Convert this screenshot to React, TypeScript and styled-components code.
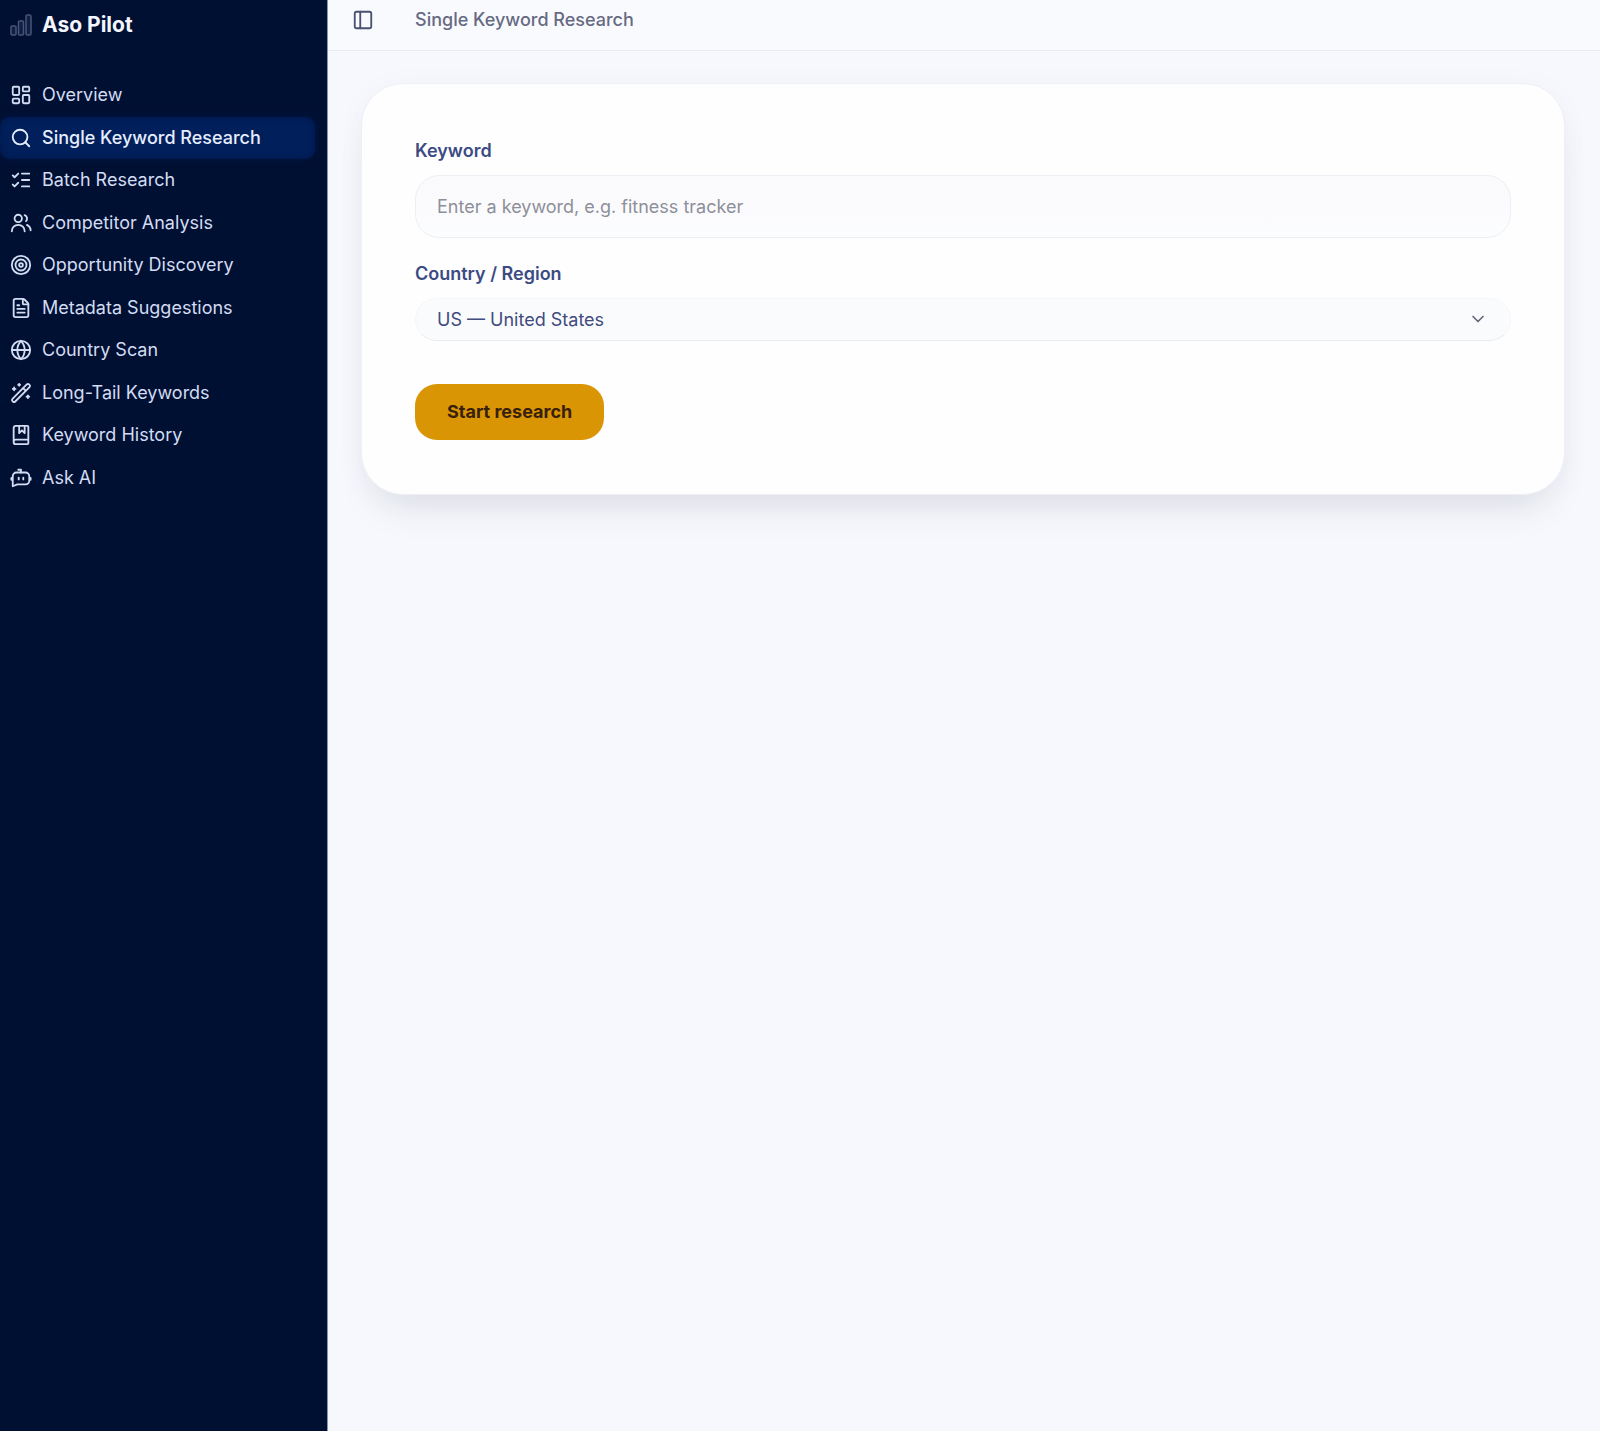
import React from "react";
import styled, { createGlobalStyle } from "styled-components";
import {
  LayoutDashboard,
  Search,
  ListChecks,
  Target,
  FileText,
  Globe,
  BookMarked,
  PanelLeft,
  ChevronDown,
} from "lucide-react";

const GlobalStyle = createGlobalStyle`
  *, *::before, *::after { box-sizing: border-box; }
  body {
    margin: 0;
    background: #f6f8fd;
    font-family: Inter, "Liberation Sans", sans-serif;
    font-size: 18px;
    line-height: 24px;
  }
  button, input, select { font: inherit; }
`;

const Shell = styled.div`
  display: flex;
  min-height: 100vh;
`;

const Sidebar = styled.aside`
  flex: 0 0 328px;
  display: flex;
  flex-direction: column;
  gap: 24px;
  background: #001033;
  border-right: 1px solid #8a93ad;
  color: #d3dcf2;
`;

const Brand = styled.a`
  display: flex;
  align-items: center;
  gap: 10px;
  height: 50px;
  padding-left: 10px;
  color: #f3f6ff;
  font-size: 21px;
  font-weight: 700;
  text-decoration: none;
`;

const Nav = styled.nav`
  display: grid;
  grid-auto-rows: 1fr;
  height: 425px;
  padding-right: 12px;
`;

const NavLink = styled.a<{ $active?: boolean }>`
  display: flex;
  align-items: center;
  gap: 10px;
  padding-left: 10px;
  border-radius: 10px;
  color: ${(p) => (p.$active ? "#e6edff" : "inherit")};
  font-weight: ${(p) => (p.$active ? 500 : 400)};
  text-decoration: none;
  background: ${(p) => (p.$active ? "#001f5b" : "transparent")};
  box-shadow: ${(p) => (p.$active ? "inset 0 0 6px #001847, 0 0 6px #001847" : "none")};
`;

const Main = styled.main`
  flex: 1;
  min-width: 0;
`;

const TopBar = styled.header`
  display: flex;
  align-items: flex-start;
  gap: 40px;
  height: 51px;
  padding: 8px 23px;
  background: #f9fafe;
  border-bottom: 1px solid #e9ecf4;
`;

const IconButton = styled.button`
  display: flex;
  padding: 1px;
  border: 0;
  background: none;
  color: #4a4f74;
`;

const PageTitle = styled.h1`
  margin: 0;
  color: #666a82;
  font-size: 18px;
  font-weight: 500;
`;

const Card = styled.form`
  margin: 32px 35px 0 33px;
  padding: 55px 53px 54px;
  background: #fefefe;
  border: 1px solid #eef0f7;
  border-radius: 42px;
  box-shadow: 0 24px 40px -16px rgba(30, 30, 40, 0.12), 0 4px 32px rgba(60, 50, 110, 0.03);
`;

const Label = styled.label`
  display: block;
  margin-bottom: 12px;
  color: #3c4b84;
  font-weight: 600;
`;

const TextInput = styled.input`
  display: block;
  width: 100%;
  height: 63px;
  margin-bottom: 24px;
  padding: 0 21px;
  border: 1px solid #eeeff4;
  border-radius: 24px;
  background: linear-gradient(#faf9fc, #fcfdff);
  color: #36467f;
  &::placeholder {
    color: #8d8f99;
    opacity: 1;
  }
`;

const SelectWrap = styled.div`
  position: relative;
  margin-bottom: 43px;
  svg {
    position: absolute;
    top: 11px;
    right: 23px;
    color: #62667a;
    pointer-events: none;
  }
`;

const Select = styled.select`
  display: block;
  width: 100%;
  height: 43px;
  padding: 0 21px;
  border: 1px solid #f5f6fa;
  border-bottom-color: #e9ebf1;
  border-radius: 22px;
  background: #fafbfd;
  color: #414b7d;
  appearance: none;
`;

const SubmitButton = styled.button`
  display: block;
  height: 56px;
  padding: 0 32px;
  border: 0;
  border-radius: 22px;
  background: #da9505;
  color: #38200b;
  font-weight: 700;
`;

type IconProps = { size?: number };

const LineIcon = ({ size = 22, children }: IconProps & { children: React.ReactNode }) => (
  <svg
    width={size}
    height={size}
    viewBox="0 0 24 24"
    fill="none"
    stroke="currentColor"
    strokeWidth="2"
    strokeLinecap="round"
    strokeLinejoin="round"
    aria-hidden="true"
  >
    {children}
  </svg>
);

const PeopleIcon = (props: IconProps) => (
  <LineIcon {...props}>
    <circle cx="9" cy="7" r="4" />
    <path d="M2 21c0-4 3-7 7-7s7 3 7 7" />
    <path d="M16 3.5a4 4 0 0 1 1.500 6.500" />
    <path d="M18.500 14c2.300 1.200 4 3.500 4 6" />
  </LineIcon>
);

const WandIcon = (props: IconProps) => (
  <LineIcon {...props}>
    <path d="M18.300 2.700 2.700 18.300a1.800 1.800 0 0 0 0 2.500l.5.500a1.800 1.800 0 0 0 2.500 0L21.300 5.700a1.800 1.800 0 0 0 0-2.500l-.5-.5a1.800 1.800 0 0 0-2.500 0Z" />
    <path d="m14.500 7 2.500 2.500" />
    <path d="M10 2v2M9 3h2M4.500 6v3M3 7.500h3M19.500 14.500v3M18 16h3" />
  </LineIcon>
);

const BotIcon = (props: IconProps) => (
  <LineIcon {...props}>
    <path d="M12 6V3H9" />
    <path d="M7 6h10a4 4 0 0 1 4 4v5a4 4 0 0 1-4 4H8l-5 2V10a4 4 0 0 1 4-4Z" />
    <path d="M9.500 11.500v2M14.500 11.500v2M1.500 12v2M22.500 12v2" />
  </LineIcon>
);

const items: { label: string; icon: React.ComponentType<IconProps>; active?: boolean }[] = [
  { label: "Overview", icon: LayoutDashboard },
  { label: "Single Keyword Research", icon: Search, active: true },
  { label: "Batch Research", icon: ListChecks },
  { label: "Competitor Analysis", icon: PeopleIcon },
  { label: "Opportunity Discovery", icon: Target },
  { label: "Metadata Suggestions", icon: FileText },
  { label: "Country Scan", icon: Globe },
  { label: "Long-Tail Keywords", icon: WandIcon },
  { label: "Keyword History", icon: BookMarked },
  { label: "Ask AI", icon: BotIcon },
];

function Logo() {
  return (
    <svg width="22" height="22" viewBox="0 0 22 22" fill="#101f45" stroke="#465577" strokeWidth="1.5" aria-hidden="true">
      <rect x="1" y="12" width="5" height="9" rx="1" />
      <rect x="8.500" y="7" width="5" height="14" rx="1" />
      <rect x="16" y="1" width="5" height="20" rx="1.500" />
    </svg>
  );
}

export default function App() {
  return (
    <>
      <GlobalStyle />
      <Shell>
        <Sidebar>
          <Brand href="#">
            <Logo />
            Aso Pilot
          </Brand>
          <Nav>
            {items.map(({ label, icon: Icon, active }) => (
              <NavLink key={label} href="#" $active={active} aria-current={active ? "page" : undefined}>
                <Icon size={22} />
                {label}
              </NavLink>
            ))}
          </Nav>
        </Sidebar>
        <Main>
          <TopBar>
            <IconButton type="button" aria-label="Toggle sidebar">
              <PanelLeft size={22} />
            </IconButton>
            <PageTitle>Single Keyword Research</PageTitle>
          </TopBar>
          <Card onSubmit={(e) => e.preventDefault()}>
            <Label htmlFor="keyword">Keyword</Label>
            <TextInput id="keyword" type="text" placeholder="Enter a keyword, e.g. fitness tracker" />
            <Label htmlFor="country">Country / Region</Label>
            <SelectWrap>
              <Select id="country" defaultValue="US">
                <option value="US">US — United States</option>
              </Select>
              <ChevronDown size={20} />
            </SelectWrap>
            <SubmitButton type="submit">Start research</SubmitButton>
          </Card>
        </Main>
      </Shell>
    </>
  );
}
